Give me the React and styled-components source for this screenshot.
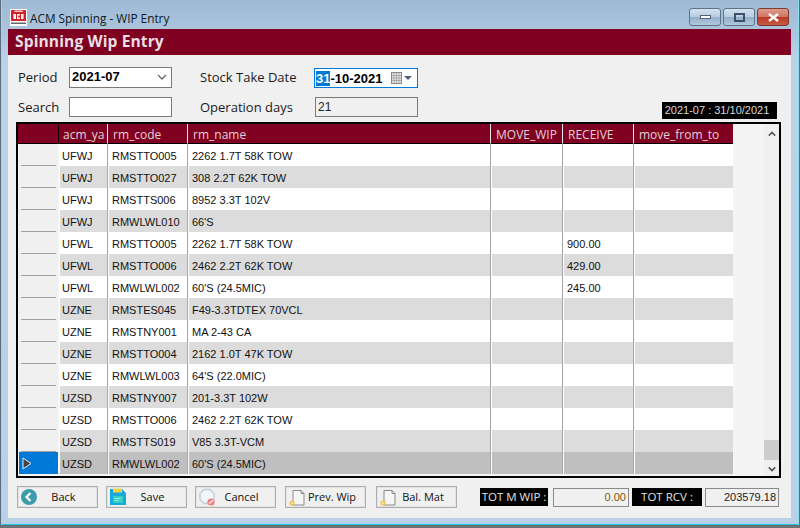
import React from 'react';
import styled, { createGlobalStyle } from 'styled-components';

const Global = createGlobalStyle`
  html, body { margin: 0; padding: 0; background: #a9c2da; }
  #root { width: 800px; height: 528px; overflow: hidden; }
  * { box-sizing: border-box; }
`;

const ui = '"Open Sans", "Noto Sans", sans-serif';
const cell = '"Liberation Sans", Arial, sans-serif';

const Window = styled.div`
  width: 800px;
  height: 528px;
  display: flex;
  flex-direction: column;
  background: linear-gradient(180deg, #9db9d4 0%, #bcd2e7 12%, #b9d0e8 100%);
  border-left: 1px solid #5a6d7d;
  border-right: 1px solid #5a6d7d;
  border-bottom: 3px solid #6a6f74;
  box-shadow: inset 1px 0 0 #8fdcef, inset -1px 0 0 #8fdcef, inset 0 -1px 0 #19c0e0;
  font-family: ${ui};
`;
const TitleBar = styled.div`
  height: 29px;
  flex: none;
  display: flex;
  align-items: center;
  padding: 6px 10px 0 9px;
  gap: 3px;
`;
const TitleText = styled.div`
  font-size: 11.8px;
  color: #101820;
  flex: 1;
  white-space: nowrap;
`;
const CtlGroup = styled.div`
  display: flex;
  gap: 2px;
  align-self: flex-start;
  margin-top: 2px;
`;
const Ctl = styled.div`
  width: ${p => p.$w}px;
  height: 18px;
  border: 1px solid ${p => (p.$close ? '#7c3a30' : '#5f7387')};
  border-radius: 3px;
  display: flex;
  align-items: center;
  justify-content: center;
  background: ${p =>
    p.$close
      ? 'linear-gradient(180deg, #dd9b8c 0%, #cf7764 48%, #b93a24 52%, #c75a45 100%)'
      : 'linear-gradient(180deg, #d3e1ef 0%, #b8cde2 48%, #94afcb 52%, #b0c8de 100%)'};
`;
const Client = styled.div`
  margin: 0 8px 0 7px;
  height: 489px;
  display: flex;
  flex-direction: column;
  background: #f0f0f0;
`;
const Heading = styled.div`
  height: 26px;
  flex: none;
  background: #7f0020;
  color: #e8dfe2;
  font-size: 15.6px;
  font-weight: 700;
  line-height: 25px;
  padding-left: 7px;
  letter-spacing: 0.1px;
`;
const Form = styled.div`
  height: 67px;
  flex: none;
  display: grid;
  grid-template-columns: 51px 103px 28px 114px 104px 1fr;
  grid-template-rows: 21px 20px;
  row-gap: 9px;
  padding: 12px 14px 0 10px;
`;
const Label = styled.div`
  font-size: 13px;
  color: #1a1a1a;
  line-height: 21px;
  white-space: nowrap;
  grid-column: ${p => p.$col};
`;
const Combo = styled.div`
  grid-column: 2;
  border: 1px solid #7a7a7a;
  background: #fff;
  display: flex;
  align-items: center;
  justify-content: space-between;
  padding: 0 4px 2px 2px;
  font: 700 13px ${cell};
  color: #000;
`;
const Input = styled.div`
  grid-column: 2;
  border: 1px solid #7a7a7a;
  background: #fff;
`;
const DateBox = styled.div`
  grid-column: 5;
  border: 1px solid #0078d7;
  background: #fff;
  margin: 1px 0 0;
  display: flex;
  align-items: center;
  padding: 0 5px 0 1px;
  font: 700 13px ${cell};
  color: #000;
`;
const Sel = styled.span`
  background: #0078d7;
  color: #fff;
`;
const DateText = styled.span`
  flex: 1;
`;
const ReadOnly = styled.div`
  grid-column: 5;
  margin-left: 1px;
  border: 1px solid #7a7a7a;
  background: #f0f0f0;
  font: 12px ${cell};
  color: #222;
  padding-left: 2px;
  line-height: 19px;
`;
const Stamp = styled.div`
  grid-column: 6;
  align-self: end;
  justify-self: end;
  height: 17px;
  width: 115px;
  margin: 0 0 -2px 0;
  padding-right: 5px;
  background: #000;
  color: #d8d8d8;
  font: 11px/17px ${cell};
  text-align: center;
`;
const GridBox = styled.div`
  height: 356px;
  margin: 0 10px 0 8px;
  flex: none;
  border: 2px solid #000;
  background: #f4f4f4;
  display: flex;
  overflow: hidden;
`;
const Table = styled.div`
  width: 715px;
  flex: none;
  display: flex;
  flex-direction: column;
`;
const Row = styled.div`
  display: grid;
  grid-template-columns: 41px 49px 80px 303px 72px 71px 99px;
  height: ${p => p.$h || 22}px;
  flex: none;
`;
const Head = styled.div`
  background: #7f0020;
  color: #e2d3d8;
  font: 12px/21px ${ui};
  padding-left: 5px;
  border-right: 1px solid #e8e8e8;
  border-bottom: 1px solid #000;
  white-space: nowrap;
  overflow: hidden;
  &:first-child { border-right-color: #1a0006; }
  &:nth-child(2) { padding-left: 4px; }
  &:last-child { border-right: 0; }
`;
const RowHead = styled.div`
  background: ${p => (p.$sel ? '#0078d7' : '#f0f0f0')};
  margin-left: 1px;
  margin-right: 1px;
  position: relative;
  display: flex;
  align-items: center;
  padding-left: 3px;
  &::after {
    content: '';
    display: ${p => (p.$sel ? 'none' : 'block')};
    position: absolute;
    left: 2px;
    right: 2px;
    bottom: 0;
    height: 1px;
    background: #a0a0a0;
  }
`;
const Cell = styled.div`
  background: ${p => (p.$sel ? '#bfbfbf' : p.$alt ? '#dcdcdc' : '#fff')};
  border-left: 1px solid #fdfdfd;
  border-right: 1px solid #a6a6a6;
  font: 11px/24px ${cell};
  color: #111;
  padding-left: 3px;
  white-space: nowrap;
  overflow: hidden;
  &:nth-child(2) { padding-left: 2px; }
  &:last-child { border-right: 0; }
`;
const Side = styled.div`
  flex: 1;
  position: relative;
  display: flex;
  justify-content: flex-end;
`;
const Scroll = styled.div`
  width: 15px;
  background: #f0f0f0;
  display: flex;
  flex-direction: column;
  justify-content: space-between;
  align-items: center;
  padding: 7px 0 4px;
  position: relative;
`;
const Thumb = styled.div`
  position: absolute;
  left: 0;
  right: 0;
  bottom: 16px;
  height: 20px;
  background: #cdcdcd;
`;
const Footer = styled.div`
  flex: 1;
  display: flex;
  align-items: flex-start;
  padding: 8px 12px 0 9px;
`;
const Btn = styled.div`
  width: 81px;
  height: 22px;
  flex: none;
  margin-right: ${p => p.$gap}px;
  border: 1px solid #adadad;
  outline: 1px solid #e4e4e4;
  outline-offset: -2px;
  background: #f0f0f0;
  display: flex;
  align-items: center;
  padding-left: 2px;
  font: 11px ${ui};
  color: #111;
`;
const BtnLabel = styled.span`
  flex: 1;
  text-align: center;
  padding-right: 8px;
  padding-bottom: 1px;
  white-space: nowrap;
`;
const Tag = styled.div`
  height: 18px;
  width: ${p => p.$w}px;
  margin: 2px ${p => p.$gap}px 0 ${p => p.$left || 0}px;
  flex: none;
  background: #000;
  color: #e0e0e0;
  font: 11.5px/18px ${ui};
  text-align: center;
  white-space: nowrap;
`;
const Total = styled.div`
  height: 19px;
  width: ${p => p.$w}px;
  margin: 2px ${p => p.$gap}px 0 0;
  flex: none;
  border: 1px solid #8a8a8a;
  background: #f0f0f0;
  font: 11px/17px ${cell};
  color: ${p => p.$c};
  text-align: right;
  padding-right: 2px;
`;

const rows = [
  ['UFWJ', 'RMSTTO005', '2262 1.7T 58K TOW', ''],
  ['UFWJ', 'RMSTTO027', '308 2.2T 62K TOW', ''],
  ['UFWJ', 'RMSTTS006', '8952 3.3T 102V', ''],
  ['UFWJ', 'RMWLWL010', "66'S", ''],
  ['UFWL', 'RMSTTO005', '2262 1.7T 58K TOW', '900.00'],
  ['UFWL', 'RMSTTO006', '2462 2.2T 62K TOW', '429.00'],
  ['UFWL', 'RMWLWL002', "60'S (24.5MIC)", '245.00'],
  ['UZNE', 'RMSTES045', 'F49-3.3TDTEX 70VCL', ''],
  ['UZNE', 'RMSTNY001', 'MA 2-43 CA', ''],
  ['UZNE', 'RMSTTO004', '2162 1.0T 47K TOW', ''],
  ['UZNE', 'RMWLWL003', "64'S (22.0MIC)", ''],
  ['UZSD', 'RMSTNY007', '201-3.3T 102W', ''],
  ['UZSD', 'RMSTTO006', '2462 2.2T 62K TOW', ''],
  ['UZSD', 'RMSTTS019', 'V85 3.3T-VCM', ''],
  ['UZSD', 'RMWLWL002', "60'S (24.5MIC)", ''],
];
const heads = ['', 'acm_ya', 'rm_code', 'rm_name', 'MOVE_WIP', 'RECEIVE', 'move_from_to'];

const AppIcon = () => (
  <svg width="17" height="17" viewBox="0 0 17 17">
    <rect x="0" y="0" width="17" height="17" fill="#fff" />
    <rect x="1" y="1" width="15" height="11" fill="#d2232a" />
    <path d="M5 1.5h7l1.5 1.5H3.5z" fill="#f7c9c9" />
    <path d="M3.5 5h2.5v5h-2.5zM7 5h3v1.5h-1.8v2h1.8v1.5h-3zM11 5h2.5v5H11z" fill="#fff" />
    <rect x="1" y="13.5" width="15" height="1.5" fill="#666" />
  </svg>
);
const DocIcon = () => (
  <svg width="19" height="19" viewBox="0 0 19 19">
    <path d="M5 2.5h8l3 3v11.5H5z" fill="#f6f6f6" stroke="#8a8a8a" />
    <path d="M13 2.5v3h3" fill="none" stroke="#8a8a8a" />
    <circle cx="4" cy="15" r="2.6" fill="#f3c64f" />
    <path d="M2.8 15h2.4" stroke="#fff" strokeWidth="0.8" />
  </svg>
);
const BackIcon = () => (
  <svg width="18" height="18" viewBox="0 0 18 18">
    <circle cx="9" cy="9" r="8" fill="#3d9bab" />
    <path d="M10.5 5l-4 4 4 4" fill="none" stroke="#fff" strokeWidth="2.2" />
  </svg>
);
const SaveIcon = () => (
  <svg width="18" height="18" viewBox="0 0 18 18">
    <path d="M1 1h12l4 4v12H1z" fill="#17a9dd" />
    <rect x="4" y="0.5" width="9" height="4" fill="#f5cf4e" />
    <rect x="4" y="8" width="10" height="7" fill="#33cfc0" />
    <path d="M5.5 10.5h6M5.5 12.5h4" stroke="#a8efe6" />
  </svg>
);
const CancelIcon = () => (
  <svg width="18" height="18" viewBox="0 0 18 18">
    <path d="M6 1.5h6l4 4v6l-4 4H6l-4-4v-6z" fill="#f2f6f8" stroke="#c4ccd2" strokeWidth="1.4" />
    <circle cx="13" cy="14" r="3.6" fill="#ef8080" />
    <path d="M11 15.5l4-3" stroke="#fff" strokeWidth="1.2" />
  </svg>
);
const Chevron = ({ up, color = '#555', w = 10, sw = 1.3 }) => (
  <svg width={w} height="6" viewBox="0 0 10 6">
    <path d={up ? 'M1 5l4-4 4 4' : 'M1 1l4 4 4-4'} fill="none" stroke={color} strokeWidth={sw} />
  </svg>
);
const CalIcon = () => (
  <svg width="21" height="13" viewBox="0 0 21 13">
    <rect x="0.5" y="0.5" width="10" height="11" fill="#e4e4e4" stroke="#8a8a8a" />
    <path d="M3 1v10M5.5 1v10M8 1v10M1 3.5h9M1 6h9M1 8.5h9" stroke="#9a9a9a" strokeWidth="0.7" />
    <path d="M13 4h8l-4 4z" fill="#50607a" />
  </svg>
);

export default function App() {
  return (
    <Window>
      <Global />
      <TitleBar>
        <AppIcon />
        <TitleText>ACM Spinning - WIP Entry</TitleText>
        <CtlGroup>
          <Ctl $w={32}>
            <svg width="11" height="5"><rect x="0.5" y="0.5" width="10" height="3" fill="#fff" stroke="#50627a" /></svg>
          </Ctl>
          <Ctl $w={32}>
            <svg width="11" height="9"><rect x="1" y="1" width="9" height="7" fill="none" stroke="#3e5068" strokeWidth="2" /></svg>
          </Ctl>
          <Ctl $w={32} $close>
            <svg width="11" height="9"><path d="M1 1l9 7M10 1l-9 7" stroke="#fff" strokeWidth="2.4" /></svg>
          </Ctl>
        </CtlGroup>
      </TitleBar>
      <Client>
        <Heading>Spinning Wip Entry</Heading>
        <Form>
          <Label $col={1}>Period</Label>
          <Combo>2021-07<Chevron color="#666" /></Combo>
          <Label $col={4}>Stock Take Date</Label>
          <DateBox><DateText><Sel>31</Sel>-10-2021</DateText><CalIcon /></DateBox>
          <Label $col={1}>Search</Label>
          <Input />
          <Label $col={4}>Operation days</Label>
          <ReadOnly>21</ReadOnly>
          <Stamp>2021-07 : 31/10/2021</Stamp>
        </Form>
        <GridBox>
          <Table>
            <Row $h={20}>
              {heads.map((h, i) => <Head key={i}>{h}</Head>)}
            </Row>
            {rows.map((r, i) => {
              const alt = i % 2 === 1;
              const sel = i === rows.length - 1;
              return (
                <Row key={i}>
                  <RowHead $sel={sel}>
                    {sel && (
                      <svg width="10" height="13" viewBox="0 0 10 13">
                        <path d="M1 1l8 5.5L1 12z" fill="#444" stroke="#e6eef6" strokeWidth="1" />
                      </svg>
                    )}
                  </RowHead>
                  <Cell $alt={alt} $sel={sel}>{r[0]}</Cell>
                  <Cell $alt={alt} $sel={sel}>{r[1]}</Cell>
                  <Cell $alt={alt} $sel={sel}>{r[2]}</Cell>
                  <Cell $alt={alt} $sel={sel} />
                  <Cell $alt={alt} $sel={sel}>{r[3]}</Cell>
                  <Cell $alt={alt} $sel={sel} />
                </Row>
              );
            })}
          </Table>
          <Side>
            <Scroll>
              <Chevron up color="#555" w={8} sw={2} />
              <Chevron color="#555" w={8} sw={2} />
              <Thumb />
            </Scroll>
          </Side>
        </GridBox>
        <Footer>
          <Btn $gap={8}><BackIcon /><BtnLabel>Back</BtnLabel></Btn>
          <Btn $gap={8}><SaveIcon /><BtnLabel>Save</BtnLabel></Btn>
          <Btn $gap={9}><CancelIcon /><BtnLabel>Cancel</BtnLabel></Btn>
          <Btn $gap={10}><DocIcon /><BtnLabel>Prev. Wip</BtnLabel></Btn>
          <Btn $gap={0}><DocIcon /><BtnLabel>Bal. Mat</BtnLabel></Btn>
          <Tag $w={68} $gap={5} $left={23}>TOT M WIP :</Tag>
          <Total $w={76} $gap={3} $c="#7a5a10">0.00</Total>
          <Tag $w={70} $gap={3}>TOT RCV :</Tag>
          <Total $w={74} $gap={0} $c="#222">203579.18</Total>
        </Footer>
      </Client>
    </Window>
  );
}
